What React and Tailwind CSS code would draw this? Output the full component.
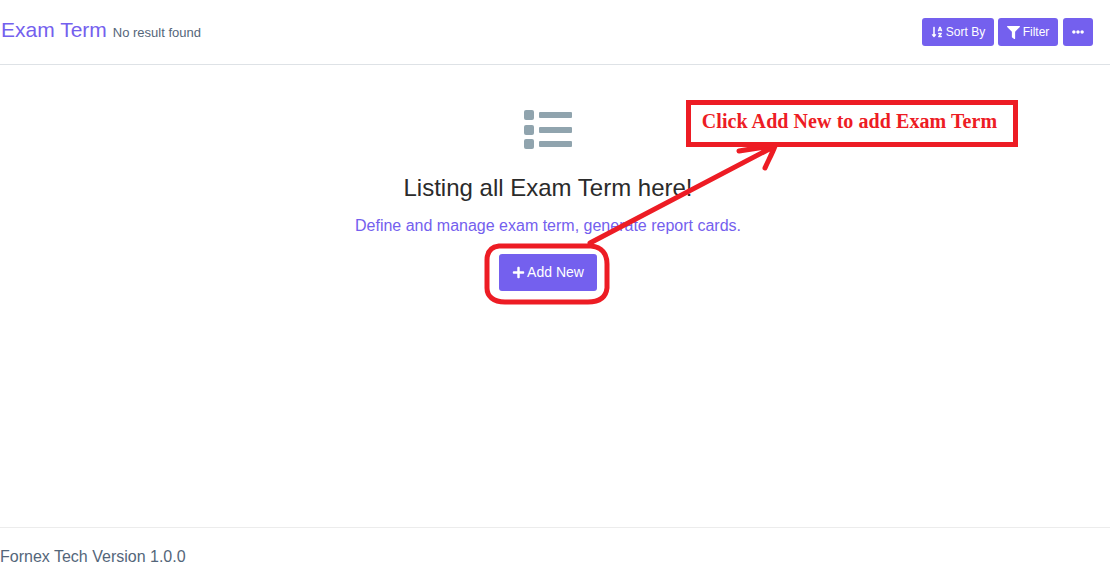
import { FaSortAlphaDown, FaFilter, FaEllipsisH, FaPlus } from 'react-icons/fa';

function HeaderButton({ children, className }) {
  return (
    <button className={`flex h-[28px] items-center justify-center rounded-[3px] bg-[#7460ee] text-[12px] text-white ${className}`}>
      {children}
    </button>
  );
}

function ListIcon() {
  return (
    <svg width="48" height="39" viewBox="0 0 48 39" fill="#90a4ae">
      <rect x="0" y="0" width="10" height="10" rx="2" />
      <rect x="0" y="15" width="10" height="10" rx="2" />
      <rect x="0" y="29" width="10" height="10" rx="2" />
      <rect x="15" y="2" width="33" height="6" rx="1" />
      <rect x="15" y="17" width="33" height="6" rx="1" />
      <rect x="15" y="31" width="33" height="6" rx="1" />
    </svg>
  );
}

export default function App() {
  return (
    <div className="relative flex h-[574px] w-[1110px] flex-col overflow-hidden bg-white font-['Liberation_Sans',sans-serif]">
      <header className="flex h-[65px] shrink-0 items-center justify-between border-b border-[#dee2e6] pl-px pr-[17px]">
        <div className="mb-[4px] flex items-baseline gap-[6px]">
          <h1 className="text-[21px] text-[#7460ee]">Exam Term</h1>
          <span className="text-[13px] text-[#54667a]">No result found</span>
        </div>
        <div className="flex gap-[4px]">
          <HeaderButton className="w-[72px] gap-[3px]">
            <FaSortAlphaDown className="text-[12px]" />
            Sort By
          </HeaderButton>
          <HeaderButton className="w-[60px] gap-[3px]">
            <FaFilter className="text-[13px]" />
            Filter
          </HeaderButton>
          <HeaderButton className="ml-[1px] w-[30px]">
            <FaEllipsisH className="text-[12px]" />
          </HeaderButton>
        </div>
      </header>

      <main className="flex flex-1 flex-col items-center pr-[14px] pt-[45px]">
        <ListIcon />
        <h2 className="mt-[25px] text-[24px] leading-[28px] text-[#2b2b2b]">Listing all Exam Term here!</h2>
        <p className="mt-[12px] text-[16px] leading-[24px] text-[#7460ee]">Define and manage exam term, generate report cards.</p>
        <button className="mt-[16px] flex h-[37px] w-[98px] items-center justify-center gap-[2px] rounded-[3px] bg-[#7460ee] text-[14px] text-white">
          <FaPlus className="text-[13px]" />
          Add New
        </button>
      </main>

      <footer className="flex h-[47px] shrink-0 items-center border-t border-[#ececec] pt-[11px] text-[16px] text-[#54667a]">
        Fornex Tech Version 1.0.0
      </footer>

      {/* red annotation drawn over the page */}
      <svg className="absolute left-0 top-0" width="1110" height="574" fill="none" stroke="#ed1c24" strokeLinecap="round" strokeLinejoin="round">
        <path strokeWidth="5" d="M590 243 L775 146 M739 151 C750 149 762 147 775 146 C772 154 768 161 765 168" />
        <path strokeWidth="5" d="M499 246 H591 C602 247 607 254 607 264 V288 C606 297 600 302 588 302 H505 C493 302 487 296 487 288 V260 C487 252 491 247 499 246 Z" />
      </svg>
      <div className="absolute left-[686px] top-[100px] flex h-[47px] w-[332px] items-center justify-center border-[5px] border-[#ed1c24] bg-white pb-[5px] pr-[5px] font-['Liberation_Serif',serif] text-[20px] font-bold tracking-[0.07px] text-[#ed1c24]">
        Click Add New to add Exam Term
      </div>
    </div>
  );
}
